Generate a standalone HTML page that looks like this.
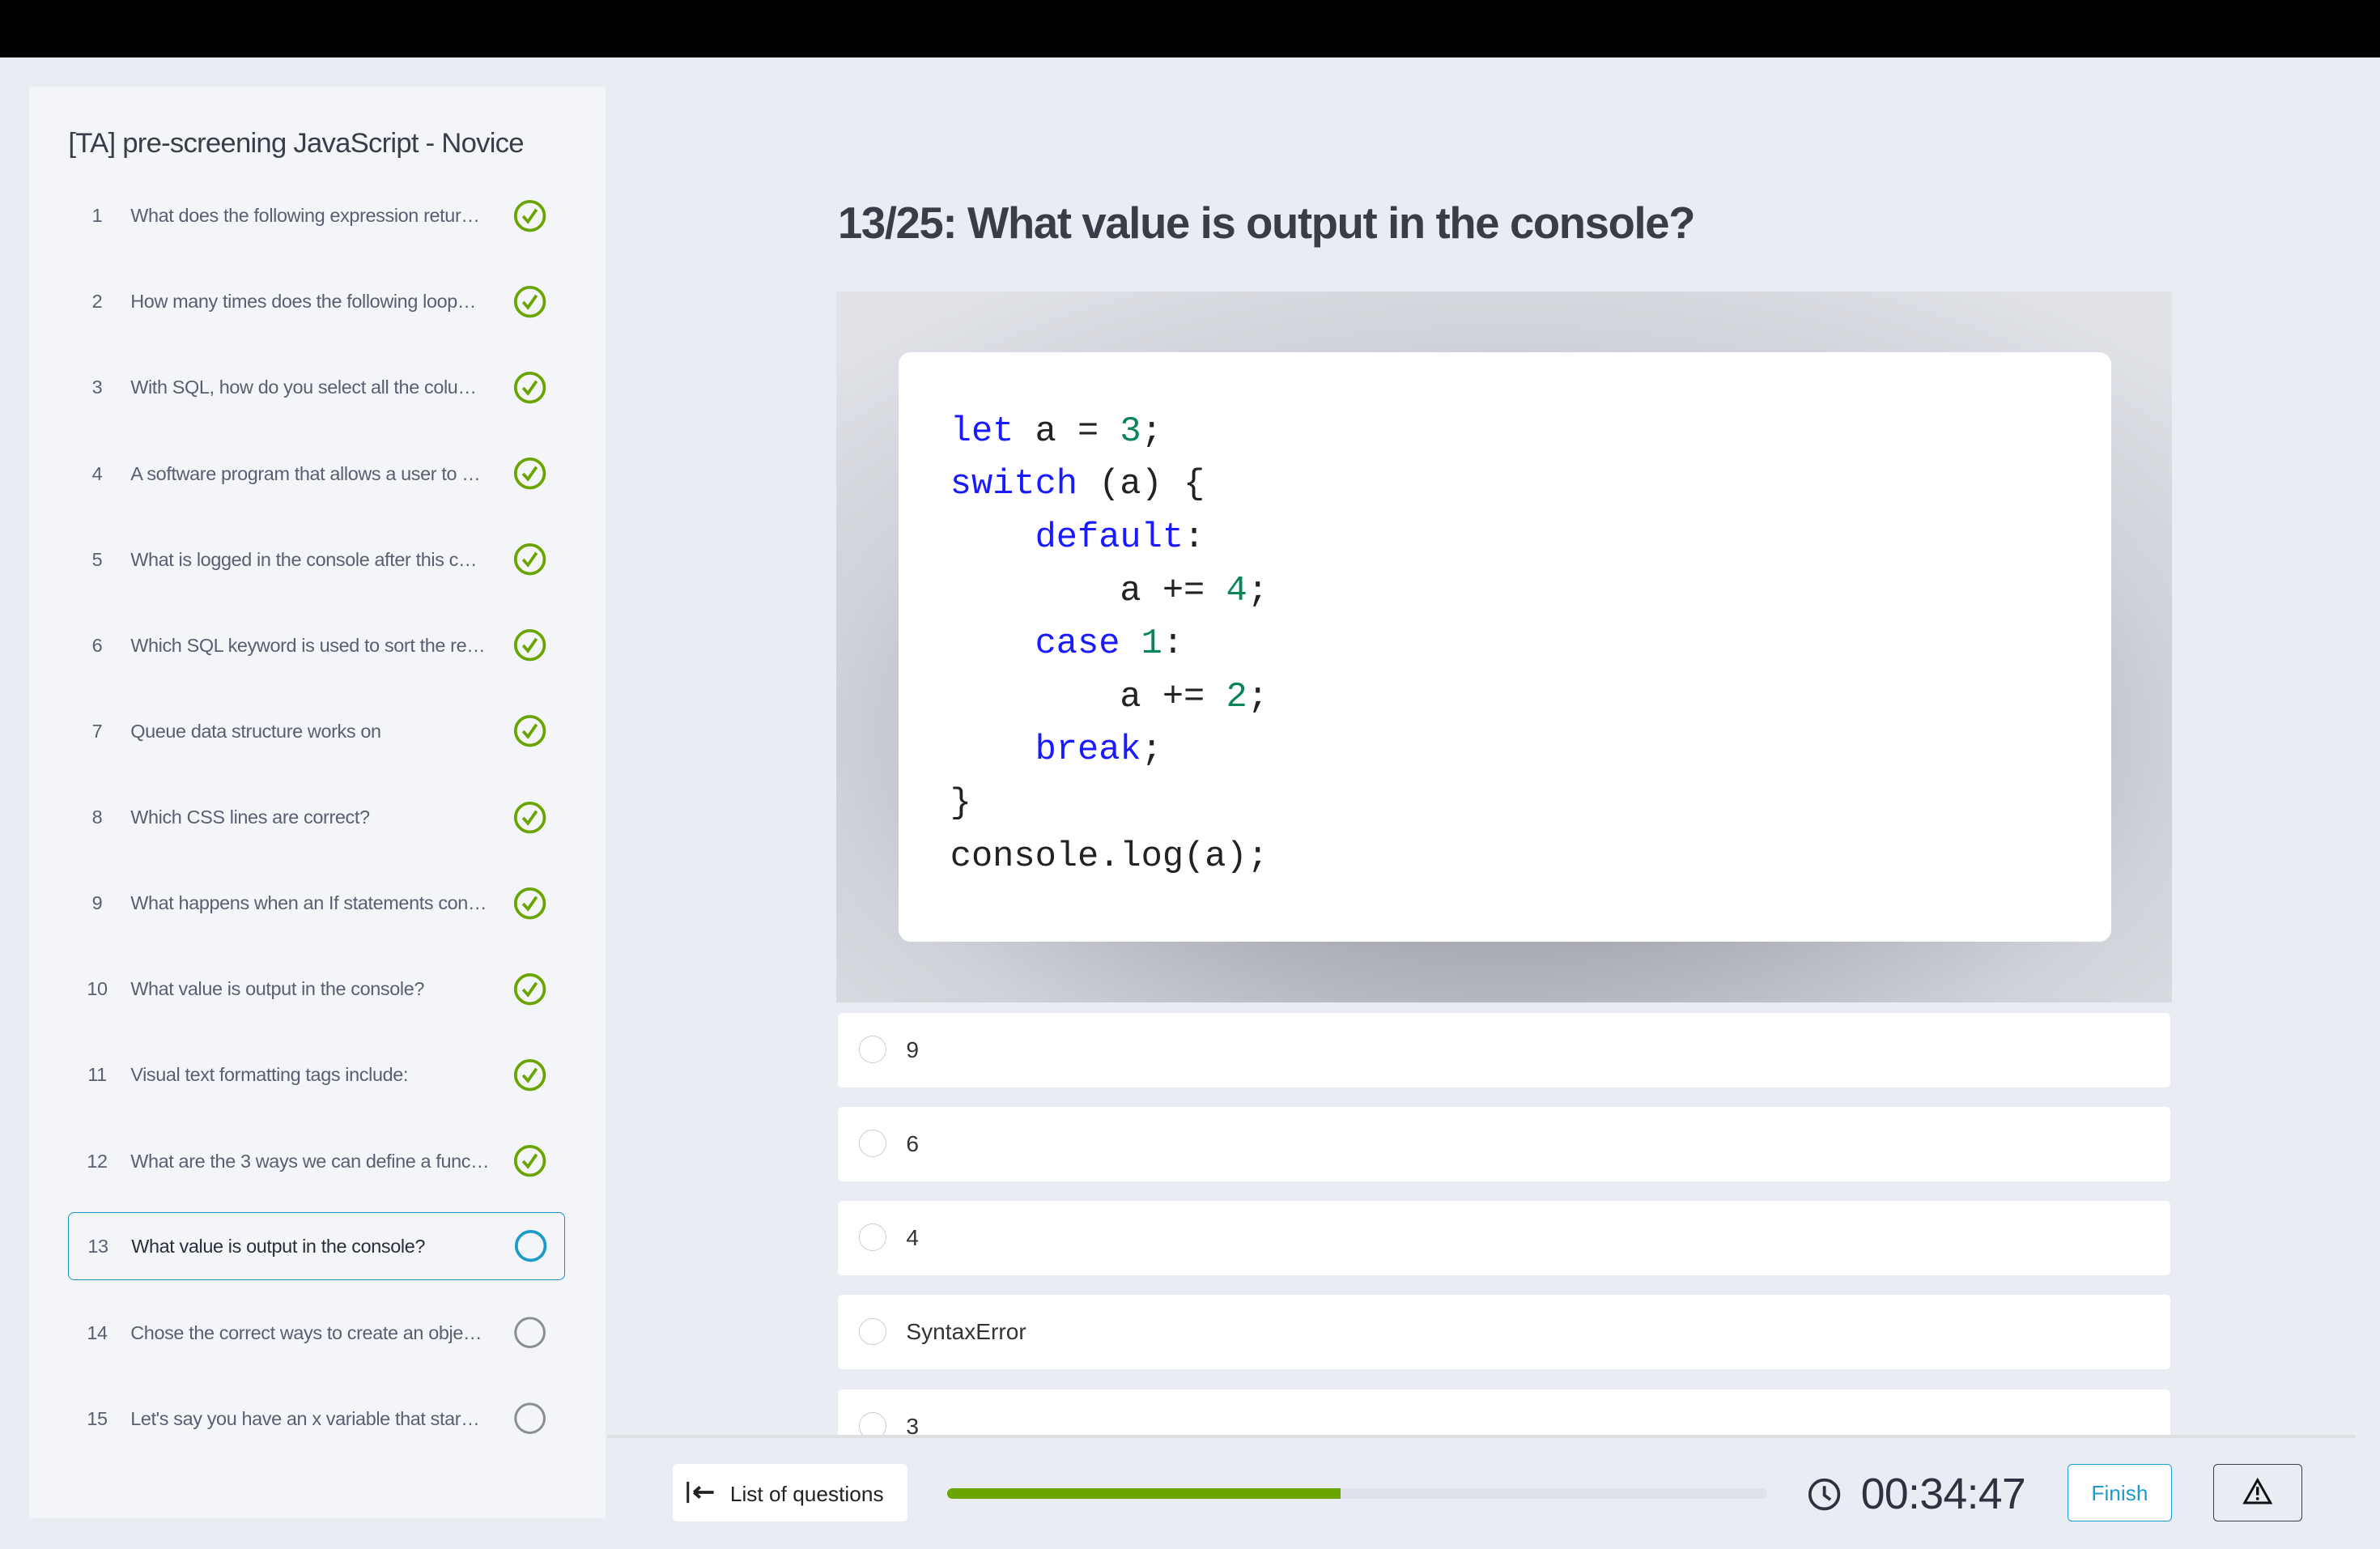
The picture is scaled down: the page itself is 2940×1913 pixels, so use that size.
<!DOCTYPE html>
<html><head><meta charset="utf-8"><style>
html,body{margin:0;padding:0;}
body{width:2940px;height:1912px;overflow:hidden;background:#e9ecf3;}
#w{zoom:1.875;width:1568px;height:1020px;position:relative;font-family:"Liberation Sans",sans-serif;}
.top{position:absolute;left:0;top:0;width:1568px;height:38px;background:#000;}
.side{position:absolute;left:19px;top:57px;width:380px;height:943px;background:#f4f5f9;}
.st{position:absolute;left:26px;top:27px;font-size:18.5px;color:#3a3d48;letter-spacing:-0.4px;}
.row{position:absolute;left:26px;width:327px;height:45px;font-size:12.5px;color:#5a5e6e;letter-spacing:-0.2px;}
.row .n{position:absolute;left:0;width:38px;text-align:center;top:16px;}
.row .t{position:absolute;left:41px;top:16px;}
.row svg{position:absolute;left:293px;top:12px;}
.sel{border:1px solid #1b8ec2;border-radius:4px;box-sizing:border-box;}
.sel .n,.sel .t{top:15px;}
.sel svg{top:11px;}
.sel .t{color:#2a2d38;}
h1{position:absolute;left:552px;top:130px;margin:0;font-size:29px;font-weight:bold;color:#3a3d48;letter-spacing:-0.7px;}
.cz{position:absolute;left:551px;top:192px;width:880px;height:468px;background:radial-gradient(ellipse 70% 75% at 50% 62%,#8c8e95 0%,#a9abb2 40%,#cfd1d8 72%,#e0e2e8 100%);}
.card{position:absolute;left:41px;top:40px;width:799px;height:388px;background:#fff;border-radius:8px;}
pre{position:absolute;left:34px;top:35px;margin:0;font-family:"Liberation Mono",monospace;font-size:23.3px;line-height:35px;color:#222;}
.k{color:#1a1aff}.m{color:#098658}
.opt{position:absolute;left:552px;width:878px;height:49px;background:#fff;border-radius:3px;font-size:15px;color:#333;}
.opt i{position:absolute;left:14px;top:15px;width:18px;height:18px;border:1px solid #c9ccd4;border-radius:50%;box-sizing:border-box;}
.opt span{position:absolute;left:45px;top:16px;}
.line{position:absolute;left:400px;top:945px;width:1152px;height:2px;background:#dedfe2;}
.lq{position:absolute;left:443px;top:964px;width:155px;height:38px;background:#fff;border-radius:3px;font-size:14px;color:#222;}
.bar{position:absolute;left:624px;top:980px;width:540px;height:7px;background:#dfe2ea;border-radius:4px;}
.bar div{width:259px;height:7px;background:#6aa400;border-radius:4px 0 0 4px;}
.tm{position:absolute;left:1226px;top:968px;font-size:28.5px;color:#2e3140;letter-spacing:-0.3px;}
.fin{position:absolute;left:1362px;top:964px;width:69px;height:38px;border:1px solid #1b9bd1;box-sizing:border-box;background:#fff;border-radius:3px;color:#1b9bd1;font-size:14px;text-align:center;line-height:38px;}
.wr{position:absolute;left:1458px;top:964px;width:59px;height:38px;border:1px solid #3a3d48;box-sizing:border-box;border-radius:3px;}
</style></head><body><div id="w">
<div class="top"></div>
<div class="side">
<div class="st">[TA] pre-screening JavaScript - Novice</div>
</div>
<div id="rows"></div>
<h1>13/25: What value is output in the console?</h1>
<div class="cz"><div class="card"><pre><span class="k">let</span> a = <span class="m">3</span>;
<span class="k">switch</span> (a) {
    <span class="k">default</span>:
        a += <span class="m">4</span>;
    <span class="k">case</span> <span class="m">1</span>:
        a += <span class="m">2</span>;
    <span class="k">break</span>;
}
console.log(a);</pre></div></div>
<div class="opt" style="top:667px"><i></i><span>9</span></div>
<div class="opt" style="top:729px"><i></i><span>6</span></div>
<div class="opt" style="top:791px"><i></i><span>4</span></div>
<div class="opt" style="top:853px"><i></i><span>SyntaxError</span></div>
<div class="opt" style="top:915px;height:31px;border-radius:3px 3px 0 0;overflow:hidden"><i></i><span>3</span></div>
<div class="line"></div>
<div class="lq"><svg style="position:absolute;left:8px;top:11px" width="22" height="16" viewBox="0 0 22 16"><path d="M2 1v14" stroke="#222" stroke-width="1.6"/><path d="M6 8h13M6 8l4-3.5M6 8l4 3.5" stroke="#222" stroke-width="2" fill="none"/></svg><span style="position:absolute;left:38px;top:12px">List of questions</span></div>
<div class="bar"><div></div></div>
<svg style="position:absolute;left:1191px;top:973px" width="22" height="23" viewBox="0 0 22 23"><circle cx="11" cy="11.5" r="9.5" fill="none" stroke="#2e3140" stroke-width="2"/><path d="M11 6v6l4 3" stroke="#2e3140" stroke-width="2" fill="none"/></svg>
<div class="tm">00:34:47</div>
<div class="fin">Finish</div>
<div class="wr"><svg style="position:absolute;left:19px;top:9px" width="20" height="18" viewBox="0 0 20 18"><path d="M10 1.5L18.5 16.5H1.5Z" fill="none" stroke="#111" stroke-width="1.6"/><path d="M10 6v5.5" stroke="#111" stroke-width="1.8"/><circle cx="10" cy="13.8" r="1" fill="#111"/></svg></div>
</div>
<script>
var q=["What does the following expression retur…","How many times does the following loop…","With SQL, how do you select all the colu…","A software program that allows a user to …","What is logged in the console after this c…","Which SQL keyword is used to sort the re…","Queue data structure works on","Which CSS lines are correct?","What happens when an If statements con…","What value is output in the console?","Visual text formatting tags include:","What are the 3 ways we can define a func…","What value is output in the console?","Chose the correct ways to create an obje…","Let's say you have an x variable that star…"];
var h="";
for(var i=0;i<15;i++){
 var y=120+i*56.6;
 var ic;
 if(i<12) ic='<svg width="22" height="22" viewBox="0 0 22 22"><circle cx="11" cy="11" r="9.5" fill="none" stroke="#6aa400" stroke-width="2"/><path d="M6.5 11.2l3.2 3.6 5.6-8" fill="none" stroke="#6aa400" stroke-width="2"/></svg>';
 else if(i==12) ic='<svg width="22" height="22" viewBox="0 0 22 22"><circle cx="11" cy="11" r="9.5" fill="none" stroke="#1b9bc9" stroke-width="2"/></svg>';
 else ic='<svg width="22" height="22" viewBox="0 0 22 22"><circle cx="11" cy="11" r="9.5" fill="none" stroke="#8a8d96" stroke-width="1.6"/></svg>';
 h+='<div class="row'+(i==12?' sel':'')+'" style="left:45px;top:'+(y-1)+'px"><span class="n">'+(i+1)+'</span><span class="t">'+q[i]+'</span>'+ic+'</div>';
}
document.getElementById('rows').innerHTML=h;
</script>
</body></html>
